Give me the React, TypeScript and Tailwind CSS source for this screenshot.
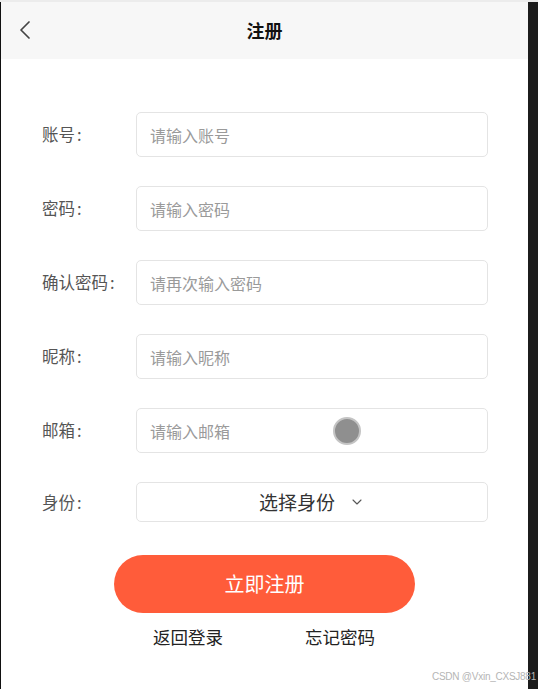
import { ChevronLeft, ChevronDown } from 'lucide-react';

const fields = [
  { label: '账号', placeholder: '请输入账号' },
  { label: '密码', placeholder: '请输入密码' },
  { label: '确认密码', placeholder: '请再次输入密码' },
  { label: '昵称', placeholder: '请输入昵称' },
  { label: '邮箱', placeholder: '请输入邮箱', dot: true },
];

const font = { fontFamily: '"Noto Sans CJK SC", "Noto Sans", sans-serif' };

function Label({ text }: { text: string }) {
  return (
    <span className="w-[135px] shrink-0 pl-[41px] text-[16.5px] text-[#555] whitespace-nowrap">
      {text}
      <span className="ml-[2px]">:</span>
    </span>
  );
}

export default function App() {
  return (
    <div className="w-[538px] h-[689px] bg-white flex flex-col overflow-hidden" style={font}>
      <div className="h-[2px] bg-[#ececec] shrink-0" />
      <div className="flex flex-1">
        <div className="flex-1 flex flex-col border-l border-[#111] relative">
          <header className="h-[57px] bg-[#f7f7f7] relative flex items-center justify-center">
            <ChevronLeft className="absolute left-[8px] top-[12px] text-[#444]" size={32} strokeWidth={1.3} />
            <h1 className="text-[18px] font-bold text-[#111]">注册</h1>
          </header>

          <div className="pt-[53px] flex flex-col gap-[29px]">
            {fields.map((f) => (
              <div key={f.label} className="flex items-center h-[45px]">
                <Label text={f.label} />
                <div className="w-[352px] h-[45px] border border-[#e4e4e4] rounded-[5px] flex items-center pl-[13px] relative">
                  <span className="text-[16px] text-[#9a9a9a]">{f.placeholder}</span>
                  {f.dot && (
                    <span className="absolute left-[196px] top-[8px] w-[28px] h-[28px] rounded-full bg-[#8f8f8f] border-2 border-[#c4c4c4]" />
                  )}
                </div>
              </div>
            ))}
            <div className="flex items-center h-[40px]">
              <Label text="身份" />
              <div className="w-[352px] h-[40px] border border-[#e4e4e4] rounded-[5px] flex items-center justify-center gap-[14px]">
                <span className="text-[19px] text-[#333]">选择身份</span>
                <ChevronDown size={16} className="text-[#555]" strokeWidth={1.6} />
              </div>
            </div>
          </div>

          <div className="flex justify-center pt-[33px]">
            <button className="w-[301px] h-[58px] rounded-full bg-[#ff5c3a] text-white text-[20px]">立即注册</button>
          </div>
          <div className="flex pt-[11px] pl-[152px] gap-[82px] text-[17.5px] text-[#222]">
            <span>返回登录</span>
            <span>忘记密码</span>
          </div>
          <span className="absolute right-[-8px] bottom-[5px] text-[10px] text-[#b5b5b5] tracking-tight" style={{ fontFamily: '"Liberation Sans", sans-serif' }}>
            CSDN @Vxin_CXSJ881
          </span>
        </div>
        <div className="w-[10px] bg-[#1c1c1c]" />
      </div>
    </div>
  );
}
